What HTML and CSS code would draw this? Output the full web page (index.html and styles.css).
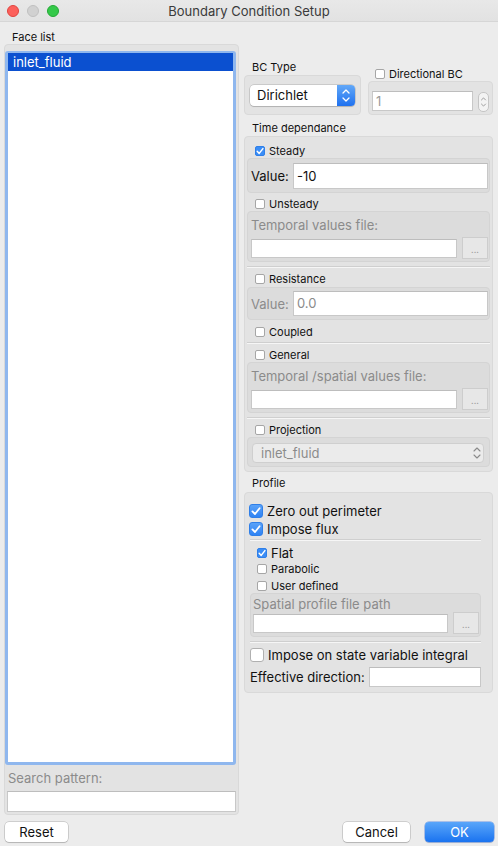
FILE: index.html
```html
<!DOCTYPE html>
<html>
<head>
<meta charset="utf-8">
<title>Boundary Condition Setup</title>
<link rel="stylesheet" href="styles.css">
</head>
<body>
<div class="window">
  <div class="titlebar">
    <div class="lights">
      <span class="light red"></span>
      <span class="light gray"></span>
      <span class="light green"></span>
    </div>
    <div class="title">Boundary Condition Setup</div>
    <div></div>
  </div>

  <div class="main">
    <div class="left">
      <div class="caption">Face list</div>
      <div class="group facegroup">
        <div class="list">
          <div class="list-row selected">inlet_fluid</div>
        </div>
        <div class="search-label">Search pattern:</div>
        <div class="input search"></div>
      </div>
    </div>

    <div class="right">
      <div class="bc-row">
        <div class="bc-type">
          <div class="caption">BC Type</div>
          <div class="group bcbox">
            <div class="select">
              <span class="select-text">Dirichlet</span>
              <span class="select-arrows">
                <svg width="18" height="21" viewBox="0 0 18 21"><path d="M6 8 L9 5 L12 8" fill="none" stroke="#fff" stroke-width="1.3" stroke-linecap="round" stroke-linejoin="round"/><path d="M6 13 L9 16 L12 13" fill="none" stroke="#fff" stroke-width="1.3" stroke-linecap="round" stroke-linejoin="round"/></svg>
              </span>
            </div>
          </div>
        </div>
        <div class="dir-bc">
          <div class="check-row dir-label"><span class="cb"></span><span>Directional BC</span></div>
          <div class="group dirbox">
            <div class="input num">1</div>
            <div class="spinner">
              <svg width="11" height="20" viewBox="0 0 11 20"><path d="M3 7.5 L5.5 5 L8 7.5" fill="none" stroke="#8a8a8a" stroke-width="1" stroke-linecap="round" stroke-linejoin="round"/><path d="M3 12.5 L5.5 15 L8 12.5" fill="none" stroke="#8a8a8a" stroke-width="1" stroke-linecap="round" stroke-linejoin="round"/></svg>
            </div>
          </div>
        </div>
      </div>

      <div class="caption time-caption">Time dependance</div>
      <div class="group timegroup">
        <div class="check-row"><span class="cb on"><svg width="10" height="10" viewBox="0 0 10 10"><path d="M2.2 5.3 L4.2 7.4 L7.9 2.6" fill="none" stroke="#fff" stroke-width="1.5" stroke-linecap="round" stroke-linejoin="round"/></svg></span><span>Steady</span></div>
        <div class="inner valbox">
          <span class="val-label">Value:</span>
          <div class="input val">-10</div>
        </div>

        <div class="check-row mt4"><span class="cb"></span><span>Unsteady</span></div>
        <div class="inner filebox">
          <div class="dim-label">Temporal values file:</div>
          <div class="filerow">
            <div class="input file"></div>
            <div class="dots">...</div>
          </div>
        </div>

        <div class="sep"></div>
        <div class="check-row"><span class="cb"></span><span>Resistance</span></div>
        <div class="inner valbox res">
          <span class="val-label dim">Value:</span>
          <div class="input val dimtext">0.0</div>
        </div>
        <div class="check-row mt5"><span class="cb"></span><span>Coupled</span></div>

        <div class="sep sep3"></div>
        <div class="check-row"><span class="cb"></span><span>General</span></div>
        <div class="inner filebox">
          <div class="dim-label">Temporal /spatial values file:</div>
          <div class="filerow">
            <div class="input file"></div>
            <div class="dots">...</div>
          </div>
        </div>

        <div class="sep"></div>
        <div class="check-row"><span class="cb"></span><span>Projection</span></div>
        <div class="inner projbox">
          <div class="dsel">
            <span>inlet_fluid</span>
            <svg width="8" height="14" viewBox="0 0 8 14"><path d="M1 5 L4 2 L7 5" fill="none" stroke="#8a8a8a" stroke-width="1.1" stroke-linecap="round" stroke-linejoin="round"/><path d="M1 9 L4 12 L7 9" fill="none" stroke="#8a8a8a" stroke-width="1.1" stroke-linecap="round" stroke-linejoin="round"/></svg>
          </div>
        </div>
      </div>

      <div class="caption prof-caption">Profile</div>
      <div class="group profgroup">
        <div class="check-row large"><span class="cbl on"><svg width="14" height="14" viewBox="0 0 14 14"><path d="M3.4 7.4 L6 10 L10.6 4.2" fill="none" stroke="#fff" stroke-width="1.8" stroke-linecap="round" stroke-linejoin="round"/></svg></span><span>Zero out perimeter</span></div>
        <div class="check-row large mt2"><span class="cbl on"><svg width="14" height="14" viewBox="0 0 14 14"><path d="M3.4 7.4 L6 10 L10.6 4.2" fill="none" stroke="#fff" stroke-width="1.8" stroke-linecap="round" stroke-linejoin="round"/></svg></span><span>Impose flux</span></div>
        <div class="sep psep"></div>
        <div class="check-row sub flat"><span class="cb on"><svg width="10" height="10" viewBox="0 0 10 10"><path d="M2.2 5.3 L4.2 7.4 L7.9 2.6" fill="none" stroke="#fff" stroke-width="1.5" stroke-linecap="round" stroke-linejoin="round"/></svg></span><span>Flat</span></div>
        <div class="check-row sub mt2"><span class="cb"></span><span>Parabolic</span></div>
        <div class="check-row sub mt3"><span class="cb"></span><span>User defined</span></div>
        <div class="inner spatbox">
          <div class="dim-label">Spatial profile file path</div>
          <div class="filerow">
            <div class="input file"></div>
            <div class="dots">...</div>
          </div>
        </div>
        <div class="sep psep"></div>
        <div class="check-row large integ"><span class="cbl"></span><span>Impose on state variable integral</span></div>
        <div class="eff-row">
          <span>Effective direction:</span>
          <div class="input eff"></div>
        </div>
      </div>
    </div>
  </div>

  <div class="footer">
    <div class="btn reset">Reset</div>
    <div class="footer-right">
      <div class="btn cancel">Cancel</div>
      <div class="btn ok">OK</div>
    </div>
  </div>
</div>
</body>
</html>
```

FILE: styles.css
```css
* { box-sizing: border-box; }
html, body { margin: 0; padding: 0; }
body {
  width: 498px;
  height: 846px;
  overflow: hidden;
  background: #ececec;
  font-family: Inter, "Liberation Sans", "DejaVu Sans", sans-serif;
  font-size: 13px;
  color: #111;
}
.window { display: flex; flex-direction: column; height: 846px; }

/* title bar */
.titlebar {
  height: 22px;
  flex: none;
  display: grid;
  grid-template-columns: 1fr auto 1fr;
  align-items: center;
  background: linear-gradient(#e8e8e8, #e2e2e2);
  border-bottom: 1px solid #d6d6d6;
}
.lights { display: flex; gap: 8px; padding-left: 7px; }
.light { width: 12px; height: 12px; border-radius: 50%; }
.light.red { background: #fc605b; border: 1px solid #e0443f; }
.light.gray { background: #d1d1d1; border: 1px solid #c0c0c0; }
.light.green { background: #35c94a; border: 1px solid #24a935; }
.title { font-size: 13px; color: #3a3a3a; line-height: 22px; }

/* layout */
.main { flex: 1; min-height: 0; display: flex; gap: 5px; padding-left: 4px; }
.left { width: 235px; display: flex; flex-direction: column; }
.right { width: 249px; display: flex; flex-direction: column; padding-top: 38px; }

.caption { font-size: 11px; line-height: 14px; padding-left: 8px; color: #111; }
.left .caption { margin-top: 8px; }

.group {
  background: #e3e3e3;
  border: 1px solid #d9d9d9;
  border-radius: 4px;
}
.inner {
  background: #dcdcdc;
  border: 1px solid #d4d4d4;
  border-radius: 4px;
}

/* face list */
.facegroup {
  flex: 1;
  display: flex;
  flex-direction: column;
  padding: 6px 2px 2px 0;
}
.list {
  flex: 1;
  background: #fff;
  border: 3px solid #8fb7ee;
  border-top-width: 2px;
  border-radius: 3px;
}
.list-row { height: 18px; line-height: 18px; padding-left: 5px; font-size: 13px; }
.list-row.selected { background: #0b50d0; color: #fff; }
.search-label { margin-top: 5px; line-height: 16px; padding-left: 3px; color: #8b8b8b; font-size: 13px; }
.search { margin-top: 5px; margin-left: 2px; height: 21px; }

.input {
  background: #fff;
  border: 1px solid #c8c8c8;
  border-top-color: #bdbdbd;
}

/* BC type row */
.bc-row { display: flex; align-items: flex-end; gap: 7px; }
.bc-type { width: 117px; }
.bcbox { height: 40px; margin-top: 1px; padding: 9px 5px 0 5px; }
.select {
  height: 21px;
  display: flex;
  background: #fff;
  border-radius: 4px;
  box-shadow: 0 0 0 0.5px rgba(0,0,0,0.22), 0 1px 1px rgba(0,0,0,0.12);
}
.select-text { flex: 1; padding-left: 7px; line-height: 21px; font-size: 13px; }
.select-arrows {
  width: 18px;
  border-radius: 0 4px 4px 0;
  background: linear-gradient(#62a8f8, #1f71ef);
  display: flex;
}
.dir-bc { width: 125px; }
.dir-label { padding-left: 7px; }
.dirbox { height: 34px; display: flex; align-items: flex-start; gap: 5px; padding: 9px 0 0 3px; }
.num { width: 101px; height: 20px; line-height: 18px; padding-left: 3px; color: #9a9a9a; font-size: 13px; }
.spinner {
  width: 11px;
  height: 20px;
  margin-top: 1px;
  border: 1px solid #c5c5c5;
  border-radius: 5px;
  background: #f3f3f3;
  display: flex;
  justify-content: center;
  overflow: hidden;
}
.spinner svg { margin-top: -1px; }

/* checkboxes */
.check-row { display: flex; align-items: center; gap: 4px; height: 14px; font-size: 11px; line-height: 14px; }
.cb {
  width: 10px;
  height: 10px;
  flex: none;
  border-radius: 2px;
  background: #fff;
  border: 1px solid #a6a6a6;
  display: flex;
}
.cb.on { background: #3a8df6; border-color: #2f7fe8; }
.cb.on svg { margin: -1px; }
.check-row.large { height: 16px; font-size: 13px; line-height: 16px; }
.cbl {
  width: 14px;
  height: 14px;
  flex: none;
  border-radius: 3px;
  background: #fff;
  border: 1px solid #b0b0b0;
  display: flex;
}
.cbl.on { background: linear-gradient(#5aa2f8, #2f83f4); border-color: #2f7fe8; }
.cbl.on svg { margin: -1px; }

.mt2 { margin-top: 2px; }
.mt3 { margin-top: 3px; }
.mt4 { margin-top: 4px; }
.mt5 { margin-top: 5px; }

/* time dependance */
.time-caption { margin-top: 6px; }
.timegroup { margin-top: 1px; padding: 7px 2px 4px 2px; display: flex; flex-direction: column; }
.timegroup .check-row { padding-left: 8px; }
.valbox { height: 35px; display: flex; align-items: center; padding: 0 1px 0 3px; }
.valbox.res { height: 33px; margin-top: 1px; }
.val-label { width: 42px; font-size: 13px; }
.val-label.dim { color: #8b8b8b; }
.val { flex: 1; height: 26px; line-height: 24px; padding-left: 3px; font-size: 13px; }
.res .val { height: 25px; line-height: 23px; }
.dimtext { color: #8b8b8b; }

.filebox { height: 51px; padding: 5px 1px 0 3px; }
.dim-label { line-height: 16px; color: #8b8b8b; font-size: 13px; }
.filerow { display: flex; align-items: center; gap: 5px; margin-top: 4px; height: 22px; }
.file { flex: 1; height: 19px; }
.dots {
  width: 26px;
  height: 22px;
  flex: none;
  background: #e7e7e7;
  border: 1px solid #cdcdcd;
  color: #a0a0a0;
  font-size: 9px;
  line-height: 9px;
  display: flex;
  align-items: flex-end;
  justify-content: center;
  padding-bottom: 4px;
}

.sep {
  height: 2px;
  border-top: 1px solid #cfcfcf;
  border-bottom: 1px solid #f6f6f6;
  margin: 4px 0;
}
.sep3 { margin-top: 3px; }

.projbox { height: 30px; padding: 5px 5px 0 4px; }
.dsel {
  height: 20px;
  display: flex;
  align-items: center;
  justify-content: space-between;
  padding: 0 2px 0 8px;
  background: #ebebeb;
  border: 1px solid #cfcfcf;
  border-radius: 4px;
  color: #8b8b8b;
  font-size: 13px;
}

/* profile */
.prof-caption { margin-top: 4px; }
.profgroup { margin-top: 2px; padding: 10px 11px 5px 4px; display: flex; flex-direction: column; }
.psep { margin: 2px 0 0 1px; }
.flat { margin-top: 5px; }
.flat span:last-child { font-size: 13px; }
.check-row.sub { padding-left: 8px; }
.spatbox { height: 44px; margin-left: 1px; padding: 2px 1px 0 2px; }
.spatbox .filerow { margin-top: 0; }
.profgroup .sep.psep + .integ { margin-top: 4px; }
.spatbox + .psep { margin: 4px 0 0 1px; }
.integ { padding-left: 1px; }
.eff-row { display: flex; align-items: center; margin-top: 4px; height: 20px; padding-left: 1px; font-size: 13px; }
.eff { margin-left: auto; width: 112px; height: 20px; }

/* footer */
.footer {
  flex: none;
  display: flex;
  justify-content: space-between;
  align-items: center;
  margin-top: 7px;
  padding: 0 4px 4px 5px;
}
.footer-right { display: flex; gap: 15px; }
.btn {
  height: 20px;
  border-radius: 4px;
  background: #fff;
  box-shadow: 0 0 0 0.5px rgba(0,0,0,0.25), 0 1px 1px rgba(0,0,0,0.12);
  font-size: 13px;
  display: flex;
  align-items: center;
  justify-content: center;
}
.reset { width: 63px; }
.cancel { width: 67px; }
.ok { width: 69px; color: #fff; background: linear-gradient(#5aa6fa, #1a73f0); box-shadow: 0 0 0 0.5px rgba(20,90,220,0.6), 0 1px 1px rgba(0,0,0,0.12); }
```
